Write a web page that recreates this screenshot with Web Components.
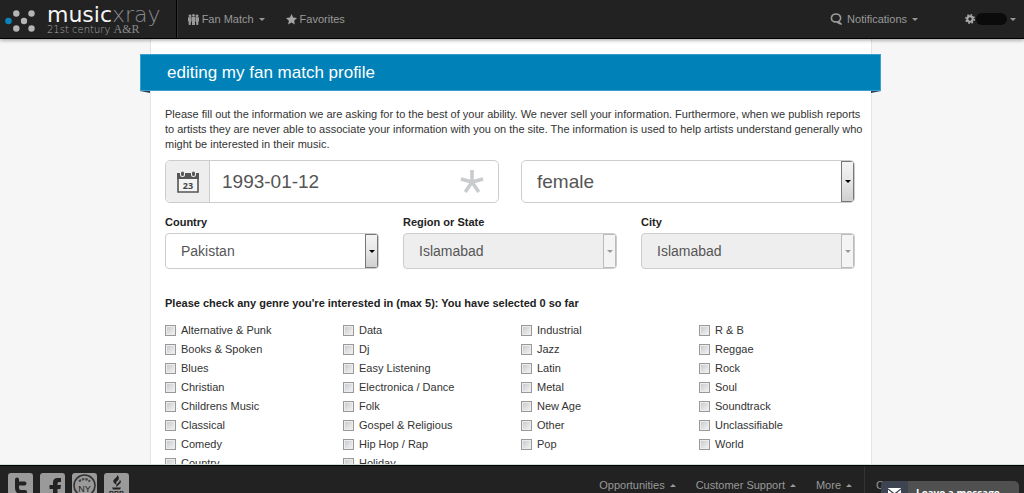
<!DOCTYPE html>
<html lang="en">
<head>
<meta charset="utf-8">
<title>Music Xray - Editing my fan match profile</title>
<style>
  body { margin: 0; font: 11px/15px "Liberation Sans", Arial, sans-serif; color: #333; background: #f6f6f6; }
</style>
</head>
<body>
<mx-app>
  <mx-header slot="header"></mx-header>
  <mx-profile></mx-profile>
  <mx-footer slot="footer"></mx-footer>
  <mx-chat slot="chat"></mx-chat>
</mx-app>

<script>
const define = (name, html, setup) => {
  const template = document.createElement('template');
  template.innerHTML = html;
  customElements.define(name, class extends HTMLElement {
    constructor() {
      super();
      this.attachShadow({ mode: 'open' }).append(template.content.cloneNode(true));
    }
    connectedCallback() {
      if (setup && !this.ready) { this.ready = true; setup(this, this.shadowRoot); }
    }
  });
};

define('mx-app', `
  <style>
    :host { display: grid; grid-template-rows: auto minmax(0, 1fr) auto; height: 100vh; overflow: hidden; }
    main { overflow: hidden; display: flex; justify-content: center; padding-right: 2px; }
    ::slotted(mx-header) { z-index: 1; }
  </style>
  <slot name="header"></slot>
  <main><slot></slot></main>
  <slot name="footer"></slot>
  <slot name="chat"></slot>
`);

/* Navigation entry with optional icon and caret (down or up). */
define('mx-nav-item', `
  <style>
    :host { display: block; }
    a { display: flex; align-items: center; gap: 3px; color: #999; text-decoration: none; white-space: nowrap; }
    :host([caret]) a::after { content: ""; border: 3px solid transparent; border-top-color: #999; border-bottom: 0; margin-left: 2px; }
    :host([caret="up"]) a::after { border: 3px solid transparent; border-bottom-color: #999; border-top: 0; margin-left: 2px; }
    ::slotted(svg) { display: block; flex: none; }
  </style>
  <a href="#"><slot name="icon"></slot><slot></slot></a>
`);

define('mx-logo', `
  <style>
    :host { display: block; }
    a { display: flex; align-items: center; gap: 12px; text-decoration: none; font-family: "DejaVu Sans", sans-serif; color: #8a8a90; }
    .name { display: block; font-size: 22px; line-height: 20px; font-weight: 200; }
    .name b { color: #f4f4f4; font-weight: 400; }
    .tag { display: block; font-size: 10px; line-height: 9px; font-weight: 200; color: #aaa; }
    .tag span { font: 12px/9px "Liberation Serif", serif; color: #8a8a8a; }
    svg { display: block; margin-top: 3px; }
  </style>
  <a href="#" aria-label="musicxray home">
    <svg width="30" height="24" viewBox="0 0 30 24"><g fill="#b5b5b5">
      <circle cx="11.300" cy="4.500" r="3.200"/><circle cx="26.500" cy="4.500" r="3.200"/><circle cx="19" cy="12" r="3.200"/>
      <circle cx="11.300" cy="19.500" r="3.200"/><circle cx="26.500" cy="19.500" r="3.200"/></g>
      <circle cx="3.500" cy="12" r="3.300" fill="#0a83bd"/></svg>
    <span><span class="name"><b>music</b>xray</span><span class="tag">21st century <span>A&amp;R</span></span></span>
  </a>
`);

define('mx-header', `
  <style>
    :host { display: flex; align-items: stretch; height: 38px; background: #222; border-bottom: 1px solid #000; box-shadow: 0 1px 4px #0006; }
    .brand { display: flex; align-items: center; padding: 0 15px 0 5px; border-right: 1px solid #000; box-shadow: 1px 0 #333; }
    nav { flex: 1; display: flex; align-items: center; gap: 21px; padding: 0 8px 0 11px; }
    .push { margin-left: auto; }
    .push svg { margin-right: 2px; }
    .user { margin-left: 26px; }
    .mask { width: 31px; height: 12px; border-radius: 6px; background: #0b0b0b; margin: 0 -2px; }
  </style>
  <div class="brand"><mx-logo></mx-logo></div>
  <nav>
    <mx-nav-item caret>
      <svg slot="icon" width="11" height="11" viewBox="0 0 11 11" fill="#999"><circle cx="2" cy="1.800" r="1.400"/><circle cx="5.500" cy="1.300" r="1.300"/><circle cx="9" cy="1.800" r="1.400"/><path d="M0 3.300h3v4l-.3 3.700H.8L.500 7.500 0 7zM3.400 2.800h4.200v4.700l-.6.500v3H4V8l-.6-.5zM8 3.300h3V7l-.5.500-.3 3.500H8.300L8 7.500z"/></svg>Fan Match</mx-nav-item>
    <mx-nav-item>
      <svg slot="icon" width="11" height="11" viewBox="0 0 11 11" fill="#a5a5a5"><path d="M5.500 0 7.100 3.600 11 4 8.100 6.700 8.900 10.600 5.500 8.600 2.100 10.600 2.900 6.700 0 4 3.900 3.600z"/></svg>Favorites</mx-nav-item>
    <mx-nav-item class="push" caret>
      <svg slot="icon" width="12" height="12" viewBox="0 0 12 12" fill="none" stroke="#999" stroke-width="1.600"><path d="M8.700 8.400C11.800 6.500 11.200 1 6 1S.2 6.800 3.400 8.400C4.800 9 6 9 7 8.800 8 10.300 9 10.900 11 10.900 10 10 9.200 9.400 8.700 8.400z"/></svg>Notifications</mx-nav-item>
    <mx-nav-item class="user" caret>
      <svg slot="icon" width="10" height="10" viewBox="0 0 10 10"><circle cx="5" cy="5" r="2.700" fill="none" stroke="#aaa" stroke-width="2"/><circle cx="5" cy="5" r="4.200" fill="none" stroke="#aaa" stroke-width="1.600" stroke-dasharray="1.650"/></svg><div class="mask"></div></mx-nav-item>
  </nav>
`);

define('mx-ribbon', `
  <style>
    :host { display: block; margin: 0 -10px 0 -11px; position: relative; }
    h1 { margin: 0; padding: 0 26px; font-size: 17px; line-height: 35px; font-weight: 400; color: #fff; background: #0081b8; border: 1px solid #3a9dca; }
    :host::before, :host::after { content: ""; position: absolute; top: 100%; left: 0; width: 10px; height: 2px; background: #26405c; clip-path: polygon(0 0, 100% 0, 100% 100%); }
    :host::after { left: auto; right: 0; clip-path: polygon(0 0, 100% 0, 0 100%); }
  </style>
  <h1><slot></slot></h1>
`);

/* Labelled drop-down with a raised arrow button; attributes: label, value, size, disabled. */
define('mx-select', `
  <style>
    :host { display: block; }
    label { display: block; font-weight: 700; color: #222; margin-bottom: 3px; }
    .box { display: grid; height: 36px; box-sizing: border-box; border: 1px solid #ccc; border-radius: 4px; background: #fff; overflow: hidden; }
    select { grid-area: 1 / 1; appearance: none; border: 0; margin: 0; padding: 0 20px 0 15px; background: transparent; font: 14px "Liberation Sans", Arial, sans-serif; color: #555; opacity: 1; width: 100%; outline: 0; }
    .arrow { grid-area: 1 / 1; justify-self: end; width: 11px; display: grid; place-items: center; pointer-events: none; border: 1px solid #777; background: linear-gradient(#f4f4f4, #e6e6e6 50%, #cfcfcf); }
    .arrow::after { content: ""; border: 3px solid transparent; border-top-color: #000; border-bottom: 0; }
    :host([size="large"]) label { display: none; }
    :host([size="large"]) .box { height: 43px; border-radius: 5px; }
    :host([size="large"]) select { font-size: 19px; }
    :host([disabled]) .box { background: #eee; }
    :host([disabled]) .arrow { background: #f4f4f4; border-color: #bbb; }
    :host([disabled]) .arrow::after { border-top-color: #999; }
  </style>
  <label for="s"></label>
  <div class="box"><select id="s"></select><span class="arrow"></span></div>
`, (el, root) => {
  const select = root.querySelector('select');
  root.querySelector('label').textContent = el.getAttribute('size') ? '' : el.getAttribute('label');
  select.setAttribute('aria-label', el.getAttribute('label'));
  select.add(new Option(el.getAttribute('value')));
  select.disabled = el.hasAttribute('disabled');
});

define('mx-date', `
  <style>
    :host { display: flex; height: 43px; box-sizing: border-box; border: 1px solid #ccc; border-radius: 5px; background: #fff; overflow: hidden; }
    .addon { width: 43px; display: grid; place-items: center; background: #eee; border-right: 1px solid #ccc; }
    input { flex: 1; min-width: 0; border: 0; outline: 0; padding: 0 12px; background: none; font: 19px "Liberation Sans", Arial, sans-serif; color: #555; }
    .star { align-self: center; margin-right: 14px; }
    svg { display: block; }
  </style>
  <label class="addon" for="d" aria-label="Birth date">
    <svg width="22" height="22" viewBox="0 0 22 22"><path d="M1 4h20v17H1z" fill="#f4f4f4" stroke="#555" stroke-width="1.600"/><path d="M0 2h22v6H0z" fill="#555"/><g stroke="#eee" stroke-width="5" stroke-linecap="round"><path d="M5.500 2v1.500M16.500 2v1.500"/></g><g stroke="#555" stroke-width="3" stroke-linecap="round"><path d="M5.500 2v1.500M16.500 2v1.500"/></g><text x="11" y="18" text-anchor="middle" font-family="Open Sans, sans-serif" font-weight="700" font-size="9" fill="#444">23</text></svg>
  </label>
  <input id="d" type="text" value="1993-01-12">
  <svg class="star" width="24" height="24" viewBox="0 0 24 24" stroke="#c8cccd" stroke-width="3.600"><path d="M12 12V0M12 12 1 9M12 12 23 9M12 12 5.300 22M12 12 18.700 22"/></svg>
`);

define('mx-check', `
  <style>
    :host { display: block; }
    label { display: flex; align-items: center; gap: 5px; line-height: 19px; }
    input { appearance: none; flex: none; width: 11px; height: 11px; margin: 0; box-sizing: border-box; border: 1px solid #999; box-shadow: inset 0 0 0 1px #ececec; background: linear-gradient(135deg, #c4c8cc, #f4f4f4); }
    input:checked { background: #0081b8; }
  </style>
  <label><input type="checkbox"><slot></slot></label>
`, (el, root) => {
  root.querySelector('input').addEventListener('change', e =>
    el.dispatchEvent(new CustomEvent('pick', { bubbles: true, detail: e.target.checked })));
});

define('mx-genres', `
  <style>
    :host { display: block; }
    h2 { margin: 0 0 10px; font-size: 11px; line-height: 15px; color: #222; }
    .list { display: grid; grid-template: repeat(8, auto) / repeat(4, 1fr); grid-auto-flow: column; column-gap: 22px; }
    mx-check.top { grid-row-start: 1; }
  </style>
  <h2>Please check any genre you're interested in (max 5): You have selected <span>0</span> so far</h2>
  <div class="list"></div>
`, (el, root) => {
  const columns = [
    ['Alternative & Punk', 'Books & Spoken', 'Blues', 'Christian', 'Childrens Music', 'Classical', 'Comedy', 'Country'],
    ['Data', 'Dj', 'Easy Listening', 'Electronica / Dance', 'Folk', 'Gospel & Religious', 'Hip Hop / Rap', 'Holiday'],
    ['Industrial', 'Jazz', 'Latin', 'Metal', 'New Age', 'Other', 'Pop'],
    ['R & B', 'Reggae', 'Rock', 'Soul', 'Soundtrack', 'Unclassifiable', 'World'],
  ];
  const list = root.querySelector('.list');
  for (const names of columns) names.forEach((name, i) => {
    const check = document.createElement('mx-check');
    check.textContent = name;
    if (i === 0) check.className = 'top';
    list.append(check);
  });
  let count = 0;
  list.addEventListener('pick', e => {
    count += e.detail ? 1 : -1;
    root.querySelector('span').textContent = count;
  });
});

define('mx-profile', `
  <style>
    :host { display: block; box-sizing: border-box; width: 100%; max-width: 722px; background: #fff; border: solid #e4e4e4; border-width: 0 1px; }
    mx-ribbon { margin-top: 15px; }
    form { padding: 16px 16px 40px 14px; }
    p { margin: 0 -14px 8px 0; }
    .two, .three { display: grid; grid-template-columns: 1fr 1fr; gap: 22px; }
    .three { grid-template-columns: 1fr 1fr 1fr; gap: 24px; margin: 12px 0 27px; }
  </style>
  <mx-ribbon>editing my fan match profile</mx-ribbon>
  <form>
    <p>Please fill out the information we are asking for to the best of your ability. We never sell your information. Furthermore, when we publish reports to artists they are never able to associate your information with you on the site. The information is used to help artists understand generally who might be interested in their music.</p>
    <div class="two">
      <mx-date></mx-date>
      <mx-select size="large" label="Gender" value="female"></mx-select>
    </div>
    <div class="three">
      <mx-select label="Country" value="Pakistan"></mx-select>
      <mx-select label="Region or State" value="Islamabad" disabled></mx-select>
      <mx-select label="City" value="Islamabad" disabled></mx-select>
    </div>
    <mx-genres></mx-genres>
  </form>
`);

define('mx-footer', `
  <style>
    :host { display: block; height: 27px; overflow: hidden; background: #222; border-top: 1px solid #000; box-shadow: 0 -1px #d5dddd; z-index: 1; }
    .bar { display: flex; align-items: stretch; height: 38px; }
    .social { flex: 1; display: flex; align-items: center; gap: 7px; padding-left: 8px; }
    .social a { display: block; width: 25px; height: 25px; }
    svg { display: block; }
    nav { display: flex; align-items: center; gap: 20px; padding-right: 12px; border-right: 1px solid #333; }
    .last { width: 159px; padding-left: 11px; box-sizing: border-box; display: flex; align-items: center; }
  </style>
  <div class="bar">
    <div class="social">
      <a href="#" aria-label="Twitter"><svg width="25" height="25" viewBox="0 0 25 25"><rect width="25" height="25" rx="3" fill="#9a9a9a"/><path d="M9 6.500v8.500q0 4 4 4h4M9 10.500h7.500" fill="none" stroke="#222" stroke-width="4" stroke-linecap="round"/></svg></a>
      <a href="#" aria-label="Facebook"><svg width="25" height="25" viewBox="0 0 25 25"><rect width="25" height="25" rx="3" fill="#9a9a9a"/><path d="M13 25v-9H9.500v-4H13V9.500Q13 5 17.500 5H21v4h-2Q17.500 9 17.500 10.500V12H21l-.6 4h-2.900v9z" fill="#222"/></svg></a>
      <a href="#" aria-label="Made in NY"><svg width="25" height="25" viewBox="0 0 25 25"><rect width="25" height="25" rx="3" fill="#9a9a9a"/><circle cx="12.500" cy="12.500" r="10.500" fill="none" stroke="#333" stroke-width="1.600"/><path d="M7 8.500Q12.500 3.500 18 8.500" fill="none" stroke="#444" stroke-width="2.200" stroke-dasharray="2.500 1"/><text x="12.500" y="19" text-anchor="middle" font-family="Liberation Sans, sans-serif" font-size="9" fill="#222">NY</text></svg></a>
      <a href="#" aria-label="Better Business Bureau"><svg width="25" height="25" viewBox="0 0 25 25"><rect width="25" height="25" rx="3" fill="#9a9a9a"/><path d="M13.500 2Q16 5 14 7.500 11 9 13 12 7 9 10.500 6 13 4.500 13.500 2zM16 7Q18 9 15.500 11L12.500 14Q11.500 12 13.500 10.500 15.500 9 16 7zM8 14.500h9l-1 2H9z" fill="#222"/><text x="12.500" y="23" text-anchor="middle" font-family="Liberation Sans, sans-serif" font-weight="700" font-size="7" fill="#222">BBB</text></svg></a>
    </div>
    <nav>
      <mx-nav-item caret="up">Opportunities</mx-nav-item>
      <mx-nav-item caret="up">Customer Support</mx-nav-item>
      <mx-nav-item caret="up">More</mx-nav-item>
    </nav>
    <div class="last"><mx-nav-item>C</mx-nav-item></div>
  </div>
`);

/* Chat tab that floats over the bottom bar and runs off the window's lower edge. */
define('mx-chat', `
  <style>
    :host { position: fixed; right: 5px; bottom: -12px; z-index: 2; }
    button { display: flex; align-items: center; height: 24px; width: 138px; padding: 0; border: 0; border-radius: 5px 5px 0 0; overflow: hidden; background: #505050; color: #fff; font: 700 10px "Open Sans", sans-serif; white-space: nowrap; }
    .icon { width: 27px; height: 24px; display: grid; place-items: center; background: #3e4452; margin-right: 8px; }
  </style>
  <button type="button"><span class="icon"><svg width="13" height="10" viewBox="0 0 13 10"><path d="M0 0h13v10H0z" fill="#fff"/><path d="m0 1 6.500 5L13 1M0 9.500l4.500-5M13 9.500l-4.500-5" fill="none" stroke="#3e4452" stroke-width="1.200"/></svg></span>Leave a message</button>
`);
</script>
</body>
</html>
